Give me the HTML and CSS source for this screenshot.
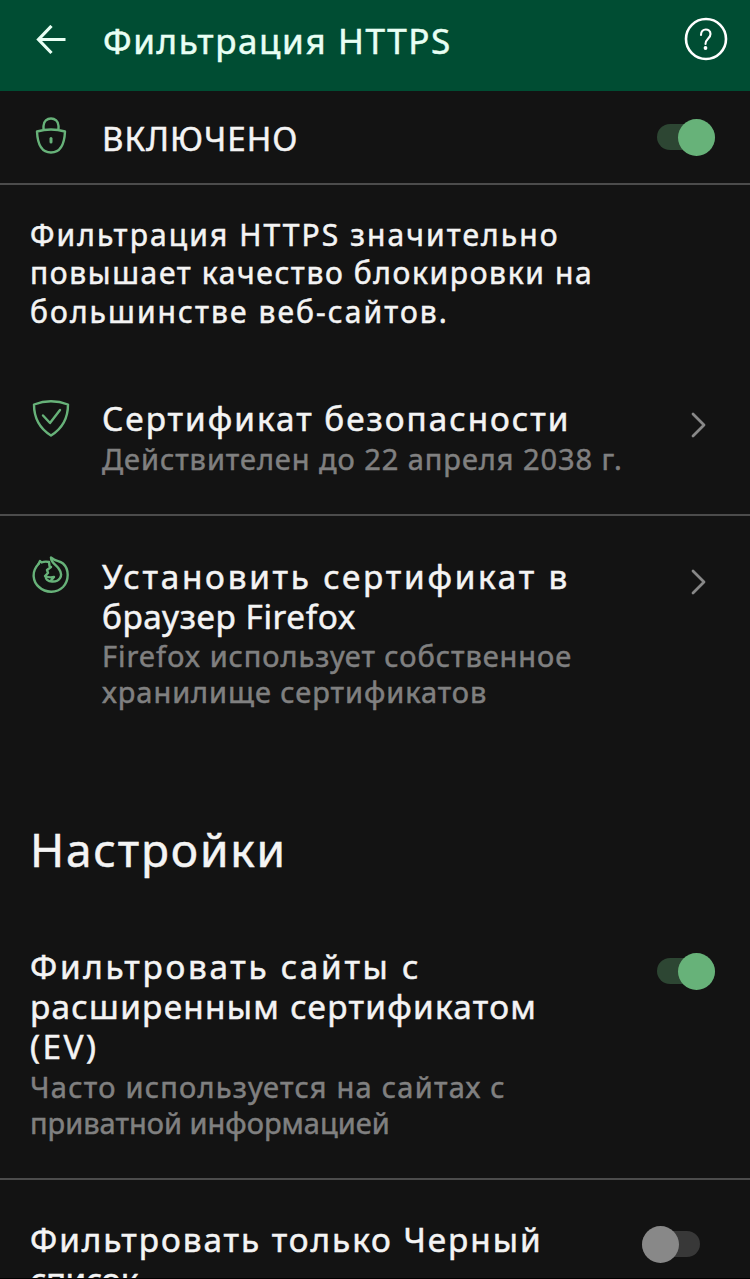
FILE: index.html
```
<!DOCTYPE html>
<html lang="ru">
<head>
    <meta charset="UTF-8">
    <meta name="viewport" content="width=device-width, initial-scale=1.0">
    <title>Фильтрация HTTPS</title>
    <link rel="stylesheet" href="styles.css">
</head>
<body>
    <header class="toolbar">
        <svg class="back" width="30" height="30" viewBox="0 0 30 30"><path d="M29.500 14.500H2.500M15.500 1L2.500 14.500L15.500 28"/></svg>
        <h1 class="toolbar-title"><span class="line l-title">Фильтрация HTTPS</span></h1>
        <svg class="help" width="44" height="44" viewBox="0 0 44 44"><circle cx="22" cy="22" r="20"/><path class="mark" d="M17 18C17 10.500 26.500 11 26.500 17C26.500 21.500 21.500 21.500 21.500 27"/><circle class="dot" cx="21.500" cy="31" r="1.900"/></svg>
    </header>

    <section class="row status">
        <svg class="icon" width="38" height="40" viewBox="0 0 38 40"><path d="M11.500 14V10C11.500 0 26.500 0 26.500 10V14M5 15.500Q19 11.500 33 15.500C32.500 27 29 36.500 19 36.500S5.500 27 5 15.500Z"/><path class="thick" d="M19 22.500V26"/></svg>
        <div class="text"><span class="line l-on">ВКЛЮЧЕНО</span></div>
        <div class="switch on"></div>
    </section>

    <p class="intro">
        <span class="line l-i1">Фильтрация HTTPS значительно</span>
        <span class="line l-i2">повышает качество блокировки на</span>
        <span class="line l-i3">большинстве веб-сайтов.</span>
    </p>

    <section class="row cert">
        <svg class="icon" width="38" height="38" viewBox="0 0 38 38"><path d="M2 5.500Q19 -1 36 5.500C36 19 29.500 30 19 36.500C8.500 30 2 19 2 5.500Z"/><path d="M11 16.500L18 24L28 11"/></svg>
        <div class="text">
            <div class="name"><span class="line l-c1">Сертификат безопасности</span></div>
            <div class="note"><span class="line l-c2">Действителен до 22 апреля 2038 г.</span></div>
        </div>
        <svg class="chevron" width="16" height="26" viewBox="0 0 16 26"><path d="M2 2L13 13L2 24"/></svg>
    </section>

    <section class="row firefox">
        <svg class="icon" width="38" height="38" viewBox="0 0 38 38">
            <path d="M6.500 8C-1 16 1 26 7 31C14 37.500 25 37 31 31C37.500 24 37 13 31 7.500C28 5 24 5 22 3.500L19 1.500C19 7 24 8.500 27 13C32 20 27 26 20 25.500C16 25.500 13 23 14 20"/>
            <path d="M6.500 8L8 5L9.500 6.500Q13 5 17 6L17.500 10L19 11L15 14L16 17L13 20Q17 22 22 21L19 24.500"/>
        </svg>
        <div class="text">
            <div class="name">
                <span class="line l-f1">Установить сертификат в</span>
                <span class="line l-f2">браузер Firefox</span>
            </div>
            <div class="note">
                <span class="line l-f3">Firefox использует собственное</span>
                <span class="line l-f4">хранилище сертификатов</span>
            </div>
        </div>
        <svg class="chevron" width="16" height="26" viewBox="0 0 16 26"><path d="M2 2L13 13L2 24"/></svg>
    </section>

    <h2 class="heading"><span class="line l-h">Настройки</span></h2>

    <section class="row ev">
        <div class="text">
            <div class="name">
                <span class="line l-e1">Фильтровать сайты с</span>
                <span class="line l-e2">расширенным сертификатом</span>
                <span class="line l-e3">(EV)</span>
            </div>
            <div class="note">
                <span class="line l-e4">Часто используется на сайтах с</span>
                <span class="line l-e5">приватной информацией</span>
            </div>
        </div>
        <div class="switch on"></div>
    </section>

    <section class="row blacklist">
        <div class="text">
            <div class="name">
                <span class="line l-b1">Фильтровать только Черный</span>
                <span class="line l-b2">список</span>
            </div>
        </div>
        <div class="switch"></div>
    </section>
</body>
</html>
```
FILE: styles.css
```
* {
    box-sizing: border-box;
    margin: 0;
    padding: 0;
}

html {
    background: #131313;
}

body {
    height: 1279px;
    overflow: hidden;
    color: #f4f4f4;
    font-family: "Noto Sans", sans-serif;
    font-size: 32px;
    line-height: 40px;
    border-bottom: 1px solid #000;
    -webkit-text-stroke: 0.5px;
}

svg {
    flex: none;
    fill: none;
    stroke-linecap: round;
    stroke-linejoin: round;
}

.line {
    display: block;
    white-space: nowrap;
}

/* letter spacing per line */
.l-title { letter-spacing: 1.6px; }
.l-on { letter-spacing: 1px; }
.l-i1 { letter-spacing: 2.08px; }
.l-i2 { letter-spacing: 1.62px; }
.l-i3 { letter-spacing: 2.08px; }
.l-c1 { letter-spacing: 2px; }
.l-c2 { letter-spacing: 0.94px; }
.l-f1 { letter-spacing: 2.75px; }
.l-f2 { letter-spacing: 0.6px; }
.l-f3 { letter-spacing: 0.94px; }
.l-f4 { letter-spacing: 0.94px; }
.l-h { letter-spacing: 1.8px; }
.l-e1 { letter-spacing: 2.7px; }
.l-e2 { letter-spacing: 1.3px; }
.l-e3 { letter-spacing: 2.5px; }
.l-e4 { letter-spacing: 1.25px; }
.l-b1 { letter-spacing: 1.95px; }
.l-b2 { letter-spacing: -0.5px; }

.toolbar {
    display: flex;
    align-items: flex-start;
    height: 91px;
    padding: 17px 22px 0 36px;
    background: #004d33;
}

.back {
    margin: 8px 37px 0 0;
    stroke: #e8fff4;
    stroke-width: 3.2;
    stroke-linecap: butt;
    stroke-linejoin: miter;
}

.toolbar-title {
    flex: 1;
    margin-top: 4px;
    color: #e8fff4;
    font-size: 35px;
    font-weight: 400;
}

.help {
    stroke: #fff;
    stroke-width: 2.6;
}

.help .mark {
    stroke-width: 2.1;
}

.help .dot {
    fill: #fff;
    stroke: none;
}

.row {
    display: flex;
    align-items: flex-start;
    padding-left: 32px;
    border-bottom: 2px solid #4c4c4c;
}

.text {
    flex: 1;
}

.name {
    font-size: 33.3px;
}

.icon {
    margin-right: 32px;
    stroke: #67b279;
    stroke-width: 2.4;
}

.icon .thick {
    stroke-width: 3;
}

.note {
    color: #808080;
    font-size: 29px;
    line-height: 36px;
}

.chevron {
    margin-right: 43px;
    stroke: #888;
    stroke-width: 2.8;
}

.switch {
    flex: none;
    position: relative;
    width: 58px;
    height: 26px;
    margin-right: 35px;
    border-radius: 13px;
    background: #383838;
}

.switch::before {
    content: "";
    position: absolute;
    top: -5px;
    left: 0;
    width: 37px;
    height: 37px;
    border-radius: 50%;
    background: #888;
}

.switch.on {
    background: #2d4633;
}

.switch.on::before {
    left: 21px;
    background: #67b279;
}

.status {
    height: 94px;
    padding-top: 24px;
}

.status .icon {
    margin-top: 1px;
}

.status .text {
    margin-top: 4px;
    font-size: 33px;
}

.status .switch {
    margin-top: 9px;
}

.intro {
    padding: 31px 30px 0;
    font-size: 30px;
    line-height: 38.3px;
}

.cert {
    height: 184px;
    margin-top: 1px;
    padding-top: 66px;
}

.cert .icon {
    margin-top: 1px;
}

.cert .note {
    margin-top: 3px;
}

.cert .chevron {
    margin-top: 14px;
}

.firefox .chevron {
    margin-top: 13px;
}

.firefox {
    padding-top: 40px;
    border: none;
}

.firefox .note {
    margin-top: 2px;
}

.heading {
    padding: 114px 30px 0;
    font-size: 46px;
    font-weight: 400;
    line-height: 50px;
}

.ev,
.blacklist {
    padding-left: 30px;
}

.ev {
    height: 306px;
    padding-top: 72px;
}

.ev .note {
    margin-top: 3px;
}

.ev .switch,
.blacklist .switch {
    margin-top: 12px;
}

.blacklist {
    padding-top: 39px;
    border: none;
}

.blacklist .switch {
    margin-right: 50px;
}
```
